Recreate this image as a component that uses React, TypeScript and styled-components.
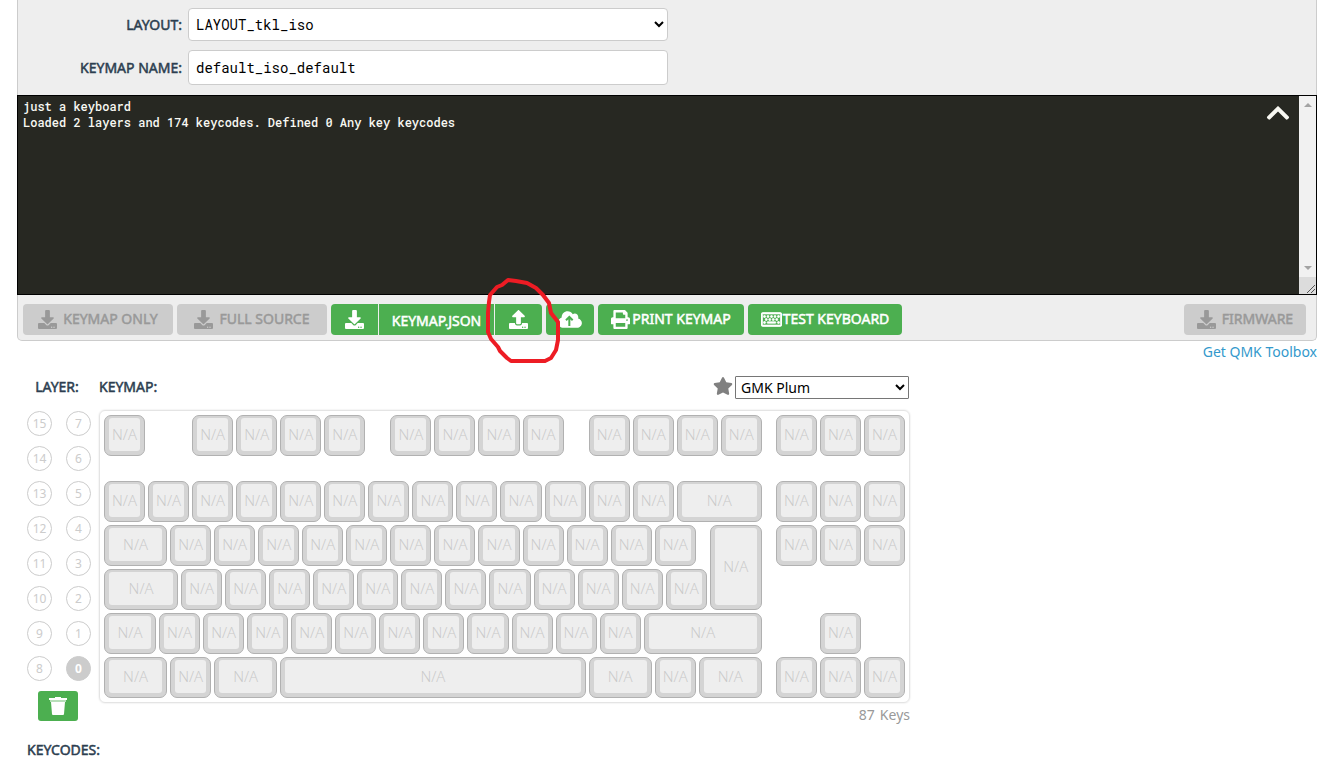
import React from 'react';
import styled, { createGlobalStyle, css } from 'styled-components';
import { FaChevronUp, FaDownload, FaRegKeyboard, FaStar, FaUpload } from 'react-icons/fa';

const Global = createGlobalStyle`
  *, *::before, *::after { box-sizing: border-box; }
  body {
    margin: 0;
    background: #fff;
    color: #2c3e50;
    font: 14px/20px "Noto Sans", "Open Sans", sans-serif;
  }
  button, input, select, textarea { font: inherit; color: inherit; }
`;

const mono = css`
  font-family: "Roboto Mono", "DejaVu Sans Mono", monospace;
`;

const heavy = css`
  -webkit-text-stroke: 0.5px currentColor;
`;

const Page = styled.main`
  margin: 0 25px 0 17px;
`;

const Panel = styled.section`
  background: #eee;
  border: 1px solid #ccc;
  border-top: 0;
  border-radius: 0 0 5px 5px;
`;

const Form = styled.div`
  display: grid;
  grid-template-columns: 164px minmax(0, 480px);
  column-gap: 6px;
  row-gap: 9px;
  align-items: center;
  padding: 8px 0 10px;
`;

const FieldLabel = styled.label`
  ${heavy}
  text-align: right;
`;

const field = css`
  ${mono}
  width: 100%;
  border: 1px solid #ccc;
  border-radius: 4px;
  background: #fff;
  color: #000;
`;

const LayoutSelect = styled.select`
  ${field}
  height: 33px;
  padding: 0 3px;
`;

const NameInput = styled.input`
  ${field}
  height: 35px;
  padding: 0 7px;
`;

const Terminal = styled.div`
  position: relative;
  display: flex;
  height: 200px;
  margin: 0 -1px;
  border: 1px solid #000;
  background: #272822;
`;

const Log = styled.textarea`
  ${mono}
  flex: 1;
  min-width: 0;
  padding: 2px 5px;
  border: 0;
  outline: 0;
  resize: none;
  overflow: hidden;
  background: transparent;
  color: #f8f8f2;
  font-size: 12px;
  font-weight: 500;
  line-height: 16px;
`;

const Collapse = styled.button`
  position: absolute;
  top: 4px;
  right: 25px;
  display: flex;
  padding: 0;
  border: 0;
  background: none;
  color: #f8f8f2;
`;

const ScrollTrack = styled.div`
  display: flex;
  flex-direction: column;
  justify-content: space-between;
  width: 17px;
  background: #f1f1f1;
`;

const Toolbar = styled.div`
  display: flex;
  gap: 4px;
  padding: 9px 10px 5px 5px;
`;

const Group = styled.div`
  display: flex;
  gap: 1px;
`;

const Action = styled.button<{ $width: number; $gap?: number; $part?: 'first' | 'mid' | 'last' }>`
  ${heavy}
  display: flex;
  align-items: center;
  justify-content: center;
  gap: ${p => p.$gap ?? 0}px;
  width: ${p => p.$width}px;
  height: 31px;
  padding: ${p => (p.$part === 'mid' ? '2px 0 0' : '0')};
  border: 0;
  border-radius: ${p =>
    p.$part === 'first' ? '4px 0 0 4px' : p.$part === 'last' ? '0 4px 4px 0' : p.$part === 'mid' ? '0' : '4px'};
  background: #4caf50;
  color: #fff;
  white-space: nowrap;
  svg { flex: none; }
  &:disabled { background: #ccc; color: #999; }
`;

const ActionText = styled.span`
  padding-bottom: 2px;
`;

const Spacer = styled.div`
  flex: 1;
`;

const Circled = styled.svg`
  position: absolute;
  z-index: 1;
  top: 277px;
  left: 484px;
  pointer-events: none;
`;

const Toolbox = styled.p`
  margin: 1px 0 0;
  text-align: right;
  a { color: #3399cc; text-decoration: none; }
`;

const Workspace = styled.section`
  display: grid;
  grid-template-columns: 72px minmax(0, 811px);
  column-gap: 10px;
  margin-top: 14px;
`;

const Heading = styled.h2<{ $indent?: number }>`
  ${heavy}
  margin: 0;
  padding-left: ${p => p.$indent ?? 0}px;
  font-size: 14px;
  font-weight: 400;
  line-height: 22px;
`;

const BoardHead = styled.div`
  display: flex;
  align-items: flex-start;
  gap: 2px;
  height: 23px;
  padding-right: 1px;
  svg { color: #808080; }
`;

const ThemeSelect = styled.select`
  width: 174px;
  height: 23px;
  padding: 0 1px;
  border: 1px solid #767676;
  border-radius: 1px;
  background: #fff;
  color: #000;
`;

const Side = styled.div`
  display: flex;
  flex-direction: column;
  align-items: center;
`;

const LayerGrid = styled.div`
  display: grid;
  grid-template-columns: 25px 25px;
  grid-auto-rows: 25px;
  gap: 10px 14px;
  padding: 12px 0 10px 12px;
`;

const Layer = styled.button<{ $active: boolean }>`
  padding: 0;
  border: 1px solid #ccc;
  border-radius: 50%;
  background: ${p => (p.$active ? '#ccc' : '#fff')};
  color: ${p => (p.$active ? '#fff' : '#ccc')};
  font-size: 12px;
  font-weight: ${p => (p.$active ? 700 : 400)};
  line-height: 20px;
`;

const TrashButton = styled.button`
  display: flex;
  align-items: center;
  justify-content: center;
  width: 40px;
  height: 30px;
  margin-left: 9px;
  padding: 0;
  border: 0;
  border-radius: 3px;
  background: #4caf50;
`;

const Board = styled.div`
  display: grid;
  grid-template-columns: repeat(73, minmax(0, 1fr));
  grid-template-rows: repeat(13, 22px);
  margin-top: 11px;
  padding: 4px 1px 1px 4px;
  border: 1px solid #e4e4e4;
  border-radius: 6px;
  box-shadow: 0 0 2px #ddd;
`;

const Key = styled.button<{ $x: number; $y: number; $w: number; $h: number }>`
  grid-column: ${p => p.$x * 4 + 1} / span ${p => p.$w * 4};
  grid-row: ${p => p.$y * 2 + 1} / span ${p => p.$h * 2};
  display: flex;
  margin: 0 3px 3px 0;
  padding: 2px 4px 4px;
  border: 1px solid #b1b1b1;
  border-radius: 7px;
  background: #d4d4d4;
`;

const Cap = styled.span`
  flex: 1;
  align-self: stretch;
  display: flex;
  align-items: center;
  justify-content: center;
  padding-bottom: 2px;
  border-radius: 3px;
  background: #eee;
  color: #c8c8c8;
  font: 300 15px/20px "Open Sans", sans-serif;
`;

const KeyCount = styled.p`
  display: flex;
  justify-content: flex-end;
  gap: 5px;
  margin: 2px 0 0;
  color: #999;
`;

const Keycodes = styled.section`
  padding: 14px 0 2px 10px;
`;

type KeySpec = { x: number; y: number; w: number; h: number };

const run = (y: number, x: number, widths: number[]): KeySpec[] =>
  widths.map((w, i) => ({ y, w, h: 1, x: x + widths.slice(0, i).reduce((a, b) => a + b, 0) }));
const ones = (n: number) => Array<number>(n).fill(1);

const keys: KeySpec[] = [
  ...run(0, 0, [1]), ...run(0, 2, ones(4)), ...run(0, 6.5, ones(4)), ...run(0, 11, ones(4)), ...run(0, 15.25, ones(3)),
  ...run(1.5, 0, [...ones(13), 2]), ...run(1.5, 15.25, ones(3)),
  ...run(2.5, 0, [1.5, ...ones(12)]), { x: 13.75, y: 2.5, w: 1.25, h: 2 }, ...run(2.5, 15.25, ones(3)),
  ...run(3.5, 0, [1.75, ...ones(12)]),
  ...run(4.5, 0, [1.25, ...ones(11), 2.75]), ...run(4.5, 16.25, [1]),
  ...run(5.5, 0, [1.5, 1, 1.5, 7, 1.5, 1, 1.5]), ...run(5.5, 15.25, ones(3)),
];

const layers = [15, 7, 14, 6, 13, 5, 12, 4, 11, 3, 10, 2, 9, 1, 8, 0];

const PrintIcon = () => (
  <svg width="19" height="19" viewBox="0 0 512 512" fill="currentColor" aria-hidden="true">
    <path d="M464 192h-16V81.941a24 24 0 0 0-7.029-16.970L383.029 7.029A24 24 0 0 0 366.059 0H88C74.745 0 64 10.745 64 24v168H48c-26.510 0-48 21.490-48 48v132c0 6.627 5.373 12 12 12h52v104c0 13.255 10.745 24 24 24h336c13.255 0 24-10.745 24-24V384h52c6.627 0 12-5.373 12-12V240c0-26.510-21.490-48-48-48zm-80 256H128v-96h256v96zM128 224V64h192v40c0 13.200 10.800 24 24 24h40v96H128zm304 72c-13.254 0-24-10.746-24-24s10.746-24 24-24 24 10.746 24 24-10.746 24-24 24z" />
  </svg>
);

const CloudUploadIcon = () => (
  <svg width="24" height="19" viewBox="0 0 640 512" fill="currentColor" aria-hidden="true">
    <path d="M537.6 226.6c4.1-10.7 6.4-22.4 6.4-34.6 0-53-43-96-96-96-19.7 0-38.1 6-53.3 16.200C367 64.200 315.300 32 256 32c-88.400 0-160 71.600-160 160 0 2.700.1 5.400.2 8.100C40.200 219.800 0 273.200 0 336c0 79.500 64.500 144 144 144h368c70.700 0 128-57.300 128-128 0-61.900-44-113.600-102.400-125.400z" />
    <path d="M302 430V180M212 276l90-92 90 92" fill="none" stroke="#4caf50" strokeWidth="54" />
  </svg>
);

const TrashIcon = () => (
  <svg width="18" height="18" viewBox="0 0 18 18" fill="#fff" aria-hidden="true">
    <path d="M0 1h6V0h6v1h6v2H0z" />
    <path d="M1 3h16v2H1z" opacity="0.6" />
    <path d="M2 5h14l-1 12q0 1-1 1H4q-1 0-1-1z" />
  </svg>
);

export default function App() {
  return (
    <Page>
      <Global />
      <Panel>
        <Form>
          <FieldLabel htmlFor="layout">LAYOUT:</FieldLabel>
          <LayoutSelect id="layout"><option>LAYOUT_tkl_iso</option></LayoutSelect>
          <FieldLabel htmlFor="name">KEYMAP NAME:</FieldLabel>
          <NameInput id="name" defaultValue="default_iso_default" spellCheck={false} />
        </Form>
        <Terminal>
          <Log
            aria-label="Console"
            readOnly
            spellCheck={false}
            value={'just a keyboard\nLoaded 2 layers and 174 keycodes. Defined 0 Any key keycodes'}
          />
          <Collapse aria-label="Collapse console"><FaChevronUp size={26} /></Collapse>
          <ScrollTrack aria-hidden="true">
            <svg width="17" height="17"><path d="M5 11l4-4 4 4z" fill="#a3a3a3" /></svg>
            <svg width="17" height="34">
              <path d="M5 6l4 4 4-4z" fill="#a3a3a3" />
              <path d="M0 17h17v17H0z" fill="#dcdcdc" />
              <path d="M8 33l8-8M12 33l4-4" stroke="#555" />
            </svg>
          </ScrollTrack>
        </Terminal>
        <Toolbar>
          <Action disabled $width={150} $gap={6}><FaDownload size={19} /><ActionText>KEYMAP ONLY</ActionText></Action>
          <Action disabled $width={150} $gap={6}><FaDownload size={19} /><ActionText>FULL SOURCE</ActionText></Action>
          <Group>
            <Action $width={47} $part="first" aria-label="Download keymap"><FaDownload size={19} /></Action>
            <Action $width={115} $part="mid">KEYMAP.JSON</Action>
            <Action $width={47} $part="last" aria-label="Upload keymap"><FaUpload size={19} /></Action>
          </Group>
          <Action $width={48} aria-label="Load from URL"><CloudUploadIcon /></Action>
          <Action $width={146} $gap={2}><PrintIcon /><ActionText>PRINT KEYMAP</ActionText></Action>
          <Action $width={154} $gap={1}><FaRegKeyboard size={21} strokeWidth={20} /><ActionText>TEST KEYBOARD</ActionText></Action>
          <Spacer />
          <Action disabled $width={122} $gap={6}><FaDownload size={19} /><ActionText>FIRMWARE</ActionText></Action>
        </Toolbar>
      </Panel>
      <Circled width="78" height="90" viewBox="484 277 78 90" fill="none" aria-hidden="true">
        <path
          d="M508 280L502 285 497 287 490 295 489 302 488 313 488 332 491 339 498 347 500 351 507 358 511 361H545L551 358 556 350 558 340 558 322 551 313 549 303 543 295 536 288 527 283 516 281Z"
          stroke="#ed1c24"
          strokeWidth="4"
          strokeLinejoin="round"
        />
      </Circled>
      <Toolbox><a href="#toolbox">Get QMK Toolbox</a></Toolbox>
      <Workspace>
        <Side>
          <BoardHead><Heading $indent={9}>LAYER:</Heading></BoardHead>
          <LayerGrid>
            {layers.map(n => <Layer key={n} $active={n === 0}>{n}</Layer>)}
          </LayerGrid>
          <TrashButton aria-label="Clear layer"><TrashIcon /></TrashButton>
        </Side>
        <div>
          <BoardHead>
            <Heading>KEYMAP:</Heading>
            <Spacer />
            <FaStar size={20} />
            <ThemeSelect aria-label="Colorway"><option>GMK Plum</option></ThemeSelect>
          </BoardHead>
          <Board>
            {keys.map(k => (
              <Key key={`${k.x}-${k.y}`} $x={k.x} $y={k.y} $w={k.w} $h={k.h}><Cap>N/A</Cap></Key>
            ))}
          </Board>
          <KeyCount><span>87</span><span>Keys</span></KeyCount>
        </div>
      </Workspace>
      <Keycodes><Heading>KEYCODES:</Heading></Keycodes>
    </Page>
  );
}
